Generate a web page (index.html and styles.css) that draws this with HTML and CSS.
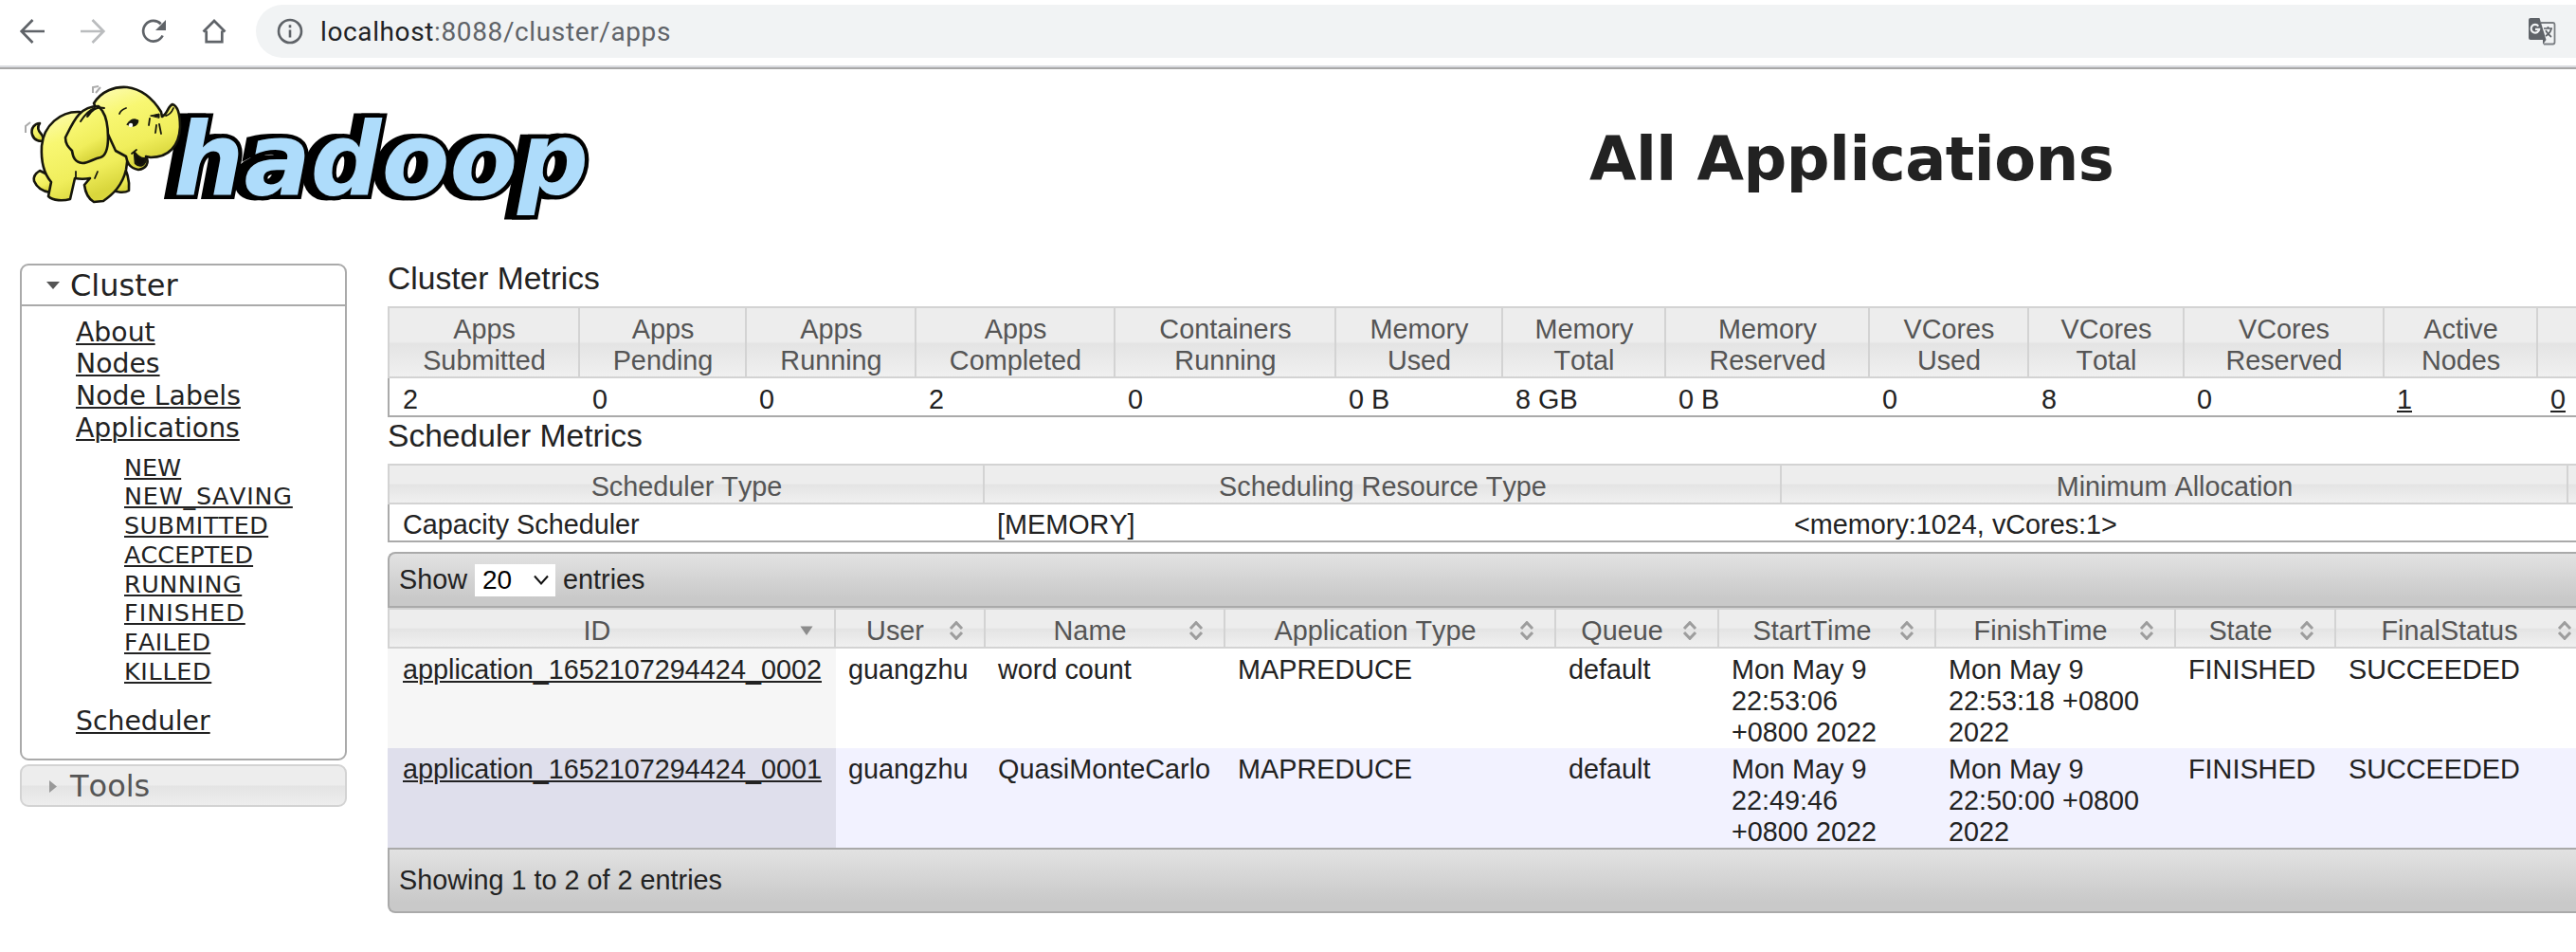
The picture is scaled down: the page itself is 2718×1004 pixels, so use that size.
FILE: index.html
```html
<!DOCTYPE html>
<html lang="en">
<head>
<meta charset="utf-8">
<title>All Applications</title>
<link rel="stylesheet" href="styles.css">
</head>
<body>
<svg class="defs" width="0" height="0" aria-hidden="true">
  <symbol id="sort" viewBox="0 0 16 20"><path d="M2 8 8 1.600 14 8M2 12l6 6.400L14 12" fill="none" stroke="#9d9d9d" stroke-width="3"/></symbol>
  <linearGradient id="skin" x1="0" y1="0" x2=".4" y2="1"><stop offset="0" stop-color="#fdfcb8"/><stop offset=".35" stop-color="#f8f772"/><stop offset=".75" stop-color="#f0ee5c"/><stop offset="1" stop-color="#d9d63c"/></linearGradient>
</svg>

<nav class="browser">
  <div class="nav-icons">
    <svg width="28" height="28" viewBox="0 0 28 28" fill="none" stroke="#5f6368" stroke-width="2.700"><path d="M27 14H3M14.500 2 2.700 14l11.800 12"/></svg>
    <svg width="28" height="28" viewBox="0 0 28 28" fill="none" stroke="#babcbe" stroke-width="2.700"><path d="M1 14h24M13.500 2 25.300 14 13.500 26"/></svg>
    <svg width="28" height="28" viewBox="0 0 28 28"><path d="M23.600 18.500A10.800 10.800 0 1 1 21.700 6.200" fill="none" stroke="#5f6368" stroke-width="2.700"/><path d="M27 2v11H16z" fill="#5f6368"/></svg>
    <svg width="28" height="28" viewBox="0 0 28 28" fill="none" stroke="#5f6368" stroke-width="2.700"><path d="M2.500 14.500 14 3l11.500 11.500M5.700 13.500V25.200H22.300V13.500"/></svg>
  </div>
  <div class="address">
    <svg width="28" height="28" viewBox="0 0 28 28" fill="none" stroke="#5f6368" stroke-width="2.600"><circle cx="14" cy="14" r="12"/><path d="M14 12.500v8M14 7.300v3"/></svg>
    <span class="url"><b>localhost</b>:8088/cluster/apps</span>
    <svg class="translate" width="30" height="30" viewBox="0 0 30 30"><path d="M14 6h12.500q2 0 2 2v18.500q0 2-2 2H17" fill="none" stroke="#7a7e82" stroke-width="1.800"/><path d="M3 1h9.500l7 23H3q-2 0-2-2V3q0-2 2-2z" fill="#5f6368"/><path d="M16 29v-5h3.500z" fill="#5f6368"/><path d="M11.300 9.600a4.300 4.300 0 1 0 .9 3.200H8" fill="none" stroke="#f1f3f4" stroke-width="2.200"/><path d="M17 12h9M21.500 10v2M25 12q-1 5-6 8M19 14q2 4 6 7" fill="none" stroke="#5f6368" stroke-width="1.700"/></svg>
  </div>
</nav>

<header class="banner">
  <svg class="logo" width="640" height="170" viewBox="0 70 640 170" role="img" aria-label="hadoop">
    <g class="wordmark" transform="translate(183 205)">
      <text x="0" y="0" textLength="438" lengthAdjust="spacingAndGlyphs">hadoop</text>
    </g>
    <g fill="url(#skin)" stroke="#16160c" stroke-width="2.600" stroke-linejoin="round" stroke-linecap="round">
      <path d="M47 148c-5 2-11 0-13-6-2-7 3-12 8-12-3 4-2 8 2 12z"/>
      <path d="M42 180c-5 3-7 7-6 11 3 7 10 11 17 12l3-16z"/>
      <path d="M128 173c6 6 9 17 8 28-5 3-13 2-18-1l3-20z"/>
      <path d="M84 118c-20-1-38 14-40 36-1 18 3 30 10 38l-3 15c5 5 16 5 23 3l5-22c5 1 11 1 16 0l-6 7c1 8 5 15 10 18l10-1c10-7 20-16 24-33l3-22z"/>
      <path d="M99 109c8-13 22-18 35-17 16 2 28 13 36 26l1 5c6-3 6-11 11-13 6 2 8 12 8 24-1 20-12 32-31 32l-5-1c4 7 0 13-8 14-10-2-12-8-13-14l-11-6z"/>
      <path d="M104 112c-20 0-26 15-35 33 0 7 3 10 7 14 1 7 3 12 11 13 7 0 12-5 19-6 6-2 8-10 8-21 0-12-2-22-6-28z"/>
      <path d="M110 114c-7-2-12 1-16 7-3 4-2 1 0-1M100 114q-8 3-15 14" fill="none" stroke-width="2"/>
      <path d="M142 161l1 11c5 5 10 2 11-5-4 1-8-1-12-6z" fill="#100f08"/>
      <path d="M139 162l5-4M126 120c1-3 4-5 7-6M157 132l1-7M164 140l1-8M170 141l-2-10M175 122q5-1 8-8" fill="none" stroke-width="1.800"/>
      <path d="M134 131q5-8 12-4-1 7-7 6z" fill="#15150e" stroke-width="1"/>
      <circle cx="138" cy="132" r="2.200" fill="#fff" stroke="none"/>
      <path d="M159 122l9-2v4z" fill="#15150e" stroke-width="1"/>
      <path d="M80 188v-7M100 188l3-7" fill="none" stroke-width="1.800"/>
    </g>
    <g fill="none" stroke="#aaa" stroke-width="2"><path d="M98 98v-6l6-1M101 98l5-6M27 140v-7l5-4"/></g>
  </svg>
  <h1>All Applications</h1>
</header>

<div class="page">
  <aside class="sidebar">
    <section class="panel open">
      <h3><svg width="16" height="16" viewBox="0 0 16 16"><path d="M1 4h14L8 12z" fill="#555"/></svg>Cluster</h3>
      <ul class="menu">
        <li><a>About</a></li>
        <li><a>Nodes</a></li>
        <li><a>Node Labels</a></li>
        <li><a>Applications</a>
          <ul class="states">
            <li class="new"><a>NEW</a></li>
            <li class="saving"><a>NEW_SAVING</a></li>
            <li class="submitted"><a>SUBMITTED</a></li>
            <li class="accepted"><a>ACCEPTED</a></li>
            <li class="running"><a>RUNNING</a></li>
            <li class="finished"><a>FINISHED</a></li>
            <li class="failed"><a>FAILED</a></li>
            <li class="killed"><a>KILLED</a></li>
          </ul>
        </li>
        <li><a>Scheduler</a></li>
      </ul>
    </section>
    <section class="panel closed">
      <h3><svg width="16" height="16" viewBox="0 0 16 16"><path d="M4 2v13l8-6.500z" fill="#999"/></svg>Tools</h3>
    </section>
  </aside>

  <main class="content">
    <h2>Cluster Metrics</h2>
    <table class="metrics cluster">
      <colgroup><col class="k1"><col class="k2"><col class="k3"><col class="k4"><col class="k5"><col class="k6"><col class="k7"><col class="k8"><col class="k9"><col class="k10"><col class="k11"><col class="k12"><col class="k13"></colgroup>
      <thead><tr><th>Apps<br>Submitted</th><th>Apps<br>Pending</th><th>Apps<br>Running</th><th>Apps<br>Completed</th><th>Containers<br>Running</th><th>Memory<br>Used</th><th>Memory<br>Total</th><th>Memory<br>Reserved</th><th>VCores<br>Used</th><th>VCores<br>Total</th><th>VCores<br>Reserved</th><th>Active<br>Nodes</th><th></th></tr></thead>
      <tbody><tr><td>2</td><td>0</td><td>0</td><td>2</td><td>0</td><td>0 B</td><td>8 GB</td><td>0 B</td><td>0</td><td>8</td><td>0</td><td><a>1</a></td><td><a>0</a></td></tr></tbody>
    </table>

    <h2 class="second">Scheduler Metrics</h2>
    <table class="metrics scheduler">
      <colgroup><col class="s1"><col class="s2"><col class="s3"><col class="s4"></colgroup>
      <thead><tr><th>Scheduler Type</th><th>Scheduling Resource Type</th><th>Minimum Allocation</th><th></th></tr></thead>
      <tbody><tr><td>Capacity Scheduler</td><td>[MEMORY]</td><td>&lt;memory:1024, vCores:1&gt;</td><td></td></tr></tbody>
    </table>

    <div class="bar top">
      <span>Show</span>
      <span class="select">20<svg width="18" height="12" viewBox="0 0 18 12"><path d="M2 1.500 9 9.500l7-8" fill="none" stroke="#111" stroke-width="2"/></svg></span>
      <span>entries</span>
    </div>
    <table class="apps">
      <colgroup><col class="a1"><col class="a2"><col class="a3"><col class="a4"><col class="a5"><col class="a6"><col class="a7"><col class="a8"><col class="a9"></colgroup>
      <thead><tr>
        <th><div>ID<svg width="16" height="20" viewBox="0 0 16 20"><path d="M1.500 5.500h13L8 15z" fill="#8c8c8c"/></svg></div></th>
        <th><div>User<svg width="16" height="20"><use href="#sort"/></svg></div></th>
        <th><div>Name<svg width="16" height="20"><use href="#sort"/></svg></div></th>
        <th><div>Application Type<svg width="16" height="20"><use href="#sort"/></svg></div></th>
        <th><div>Queue<svg width="16" height="20"><use href="#sort"/></svg></div></th>
        <th><div>StartTime<svg width="16" height="20"><use href="#sort"/></svg></div></th>
        <th><div>FinishTime<svg width="16" height="20"><use href="#sort"/></svg></div></th>
        <th><div>State<svg width="16" height="20"><use href="#sort"/></svg></div></th>
        <th><div>FinalStatus<svg width="16" height="20"><use href="#sort"/></svg></div></th>
      </tr></thead>
      <tbody>
        <tr class="odd"><td><a>application_1652107294424_0002</a></td><td>guangzhu</td><td>word count</td><td>MAPREDUCE</td><td>default</td><td>Mon May 9<br>22:53:06<br>+0800 2022</td><td>Mon May 9<br>22:53:18 +0800<br>2022</td><td>FINISHED</td><td>SUCCEEDED</td></tr>
        <tr class="even"><td><a>application_1652107294424_0001</a></td><td>guangzhu</td><td>QuasiMonteCarlo</td><td>MAPREDUCE</td><td>default</td><td>Mon May 9<br>22:49:46<br>+0800 2022</td><td>Mon May 9<br>22:50:00 +0800<br>2022</td><td>FINISHED</td><td>SUCCEEDED</td></tr>
      </tbody>
    </table>
    <div class="bar bottom">Showing 1 to 2 of 2 entries</div>
  </main>
</div>
</body>
</html>
```

FILE: styles.css
```css
* { box-sizing: border-box; }
body {
  margin: 0;
  height: 1004px;
  overflow: hidden;
  background: #fff;
  color: #222;
  font: 28.8px/33px "Liberation Sans", Arial, sans-serif;
  font-kerning: none;
}
svg { display: block; flex: none; }
.defs { position: absolute; }
h1, h2, h3, ul { margin: 0; padding: 0; font-weight: normal; list-style: none; }
a { text-decoration: underline; text-decoration-thickness: 2px; text-underline-offset: 2px; }

/* Browser bar */
.browser {
  display: flex;
  height: 73px;
  padding: 5px 0 0 20px;
  border-bottom: 2px solid #a8a8a8;
  box-shadow: inset 0 -2px #dadce0;
}
.nav-icons { display: flex; gap: 36px; width: 250px; height: 56px; align-items: center; }
.address {
  display: flex;
  flex: 1;
  align-items: center;
  height: 56px;
  padding: 0 21px 0 22px;
  border-radius: 28px 0 0 28px;
  background: #f1f3f4;
}
.url { margin-left: 18px; padding-top: 1px; color: #5f6368; font: 28px/56px Roboto, sans-serif; letter-spacing: .62px; }
.url b { color: #202124; font-weight: 400; }
.translate { margin-left: auto; }

/* Banner */
.banner { display: flex; height: 205px; }
.logo { margin-top: -3px; overflow: visible; }
.wordmark text {
  font: italic bold 107px "DejaVu Sans", sans-serif;
  fill: #aedcfb;
  stroke: #000;
  stroke-width: 9px;
  paint-order: stroke;
}
.wordmark { filter: drop-shadow(-8px 0 0 #000); }
h1 {
  flex: 1;
  padding: 57px 0 0 1037px;
  color: #222;
  font: bold 64px/76px "DejaVu Sans", sans-serif;
  letter-spacing: -.55px;
  white-space: nowrap;
}

/* Sidebar */
.page { display: flex; }
.sidebar { width: 409px; padding: 0 43px 0 21px; font-family: "DejaVu Sans", sans-serif; }
.panel { border: 2px solid #aaa; border-radius: 9px; }
.panel h3 { display: flex; align-items: center; gap: 10px; padding-left: 25px; height: 43px; font-size: 32px; line-height: 42px; }
.open { height: 524px; }
.open h3 { border-bottom: 2px solid #aaa; }
.closed { height: 45px; margin-top: 4px; border-color: #d3d3d3; color: #555; background: linear-gradient(#ededed 0 48%, #e4e4e4 52%, #eee); }
.closed h3 { height: 42px; line-height: 42px; }
.menu { padding: 10.6px 0 0 57px; font-size: 28.3px; line-height: 33.8px; }
.states { margin: 9px 0 21px; padding-left: 51px; font-size: 25.4px; line-height: 30.7px; }
.saving { letter-spacing: .8px; }
.submitted { letter-spacing: .45px; }
.accepted { letter-spacing: .1px; }
.running { letter-spacing: .55px; }
.finished { letter-spacing: 1.05px; }
.failed { letter-spacing: .35px; }
.killed { letter-spacing: .7px; }

/* Content */
.content { width: 2309px; overflow: hidden; }
h2 { height: 45px; padding-top: 1px; font-size: 33.6px; line-height: 30px; }
.second { height: 49px; line-height: 38px; }
table { table-layout: fixed; border-spacing: 0; }
th { font-weight: normal; text-align: center; color: #555; }
td { text-align: left; vertical-align: top; }
th, td { padding: 6px 12px 0 13px; white-space: nowrap; }
th { border: solid #d3d3d3; border-width: 2px 2px 2px 0; background: linear-gradient(#ededed 0 49%, #e4e4e4 52%, #f0f0f0); }
th:first-child { border-left-width: 2px; }

.metrics tbody td { border-bottom: 2px solid #aaa; }
.metrics td:first-child { padding-left: 14px; border-left: 2px solid #aaa; }
.cluster { width: 2343px; }
.cluster td { height: 41px; }
.cluster th { padding-left: 1px; padding-right: 0; }
.k1 { width: 203px; } .k2 { width: 176px; } .k3 { width: 179px; } .k4 { width: 210px; }
.k5 { width: 233px; } .k6 { width: 176px; } .k7 { width: 172px; } .k8 { width: 215px; }
.k9 { width: 168px; } .k10 { width: 164px; } .k11 { width: 211px; } .k12 { width: 162px; }
.k13 { width: 74px; }

.scheduler { width: 2401px; }
.scheduler td { padding-top: 5px; }
.s1 { width: 630px; } .s2 { width: 841px; } .s3 { width: 830px; } .s4 { width: 100px; }

.bar {
  display: flex;
  align-items: center;
  border: 2px solid #aaa;
  border-right: 0;
  padding-left: 10px;
  background: linear-gradient(#e2e2e2, #c9c9c9 85%);
}
.top { gap: 8px; height: 59px; margin-top: 10px; border-radius: 8px 0 0 0; }
.bottom { height: 69px; border-radius: 0 0 0 8px; }
.select {
  display: flex;
  align-items: center;
  justify-content: space-between;
  width: 85px;
  height: 34px;
  padding: 0 6px 0 8px;
  background: #fff;
  color: #000;
  font-size: 28px;
}

.apps { width: 2328px; }
.apps th { padding: 6px 21px 0 13px; }
.apps th div { display: flex; align-items: center; justify-content: center; position: relative; padding-right: 23px; }
.apps th svg { position: absolute; right: 0; top: 6px; }
.apps td { padding-left: 13px; }
.apps td:first-child { padding-left: 16px; background: #f6f6f6; }
.even td { background: #f2f2ff; }
.apps .even td:first-child { background: #dfdfec; }
.a1 { width: 473px; } .a2 { width: 158px; } .a3 { width: 253px; } .a4 { width: 349px; } .a5 { width: 172px; }
.a6 { width: 229px; } .a7 { width: 253px; } .a8 { width: 169px; } .a9 { width: 272px; }
```
